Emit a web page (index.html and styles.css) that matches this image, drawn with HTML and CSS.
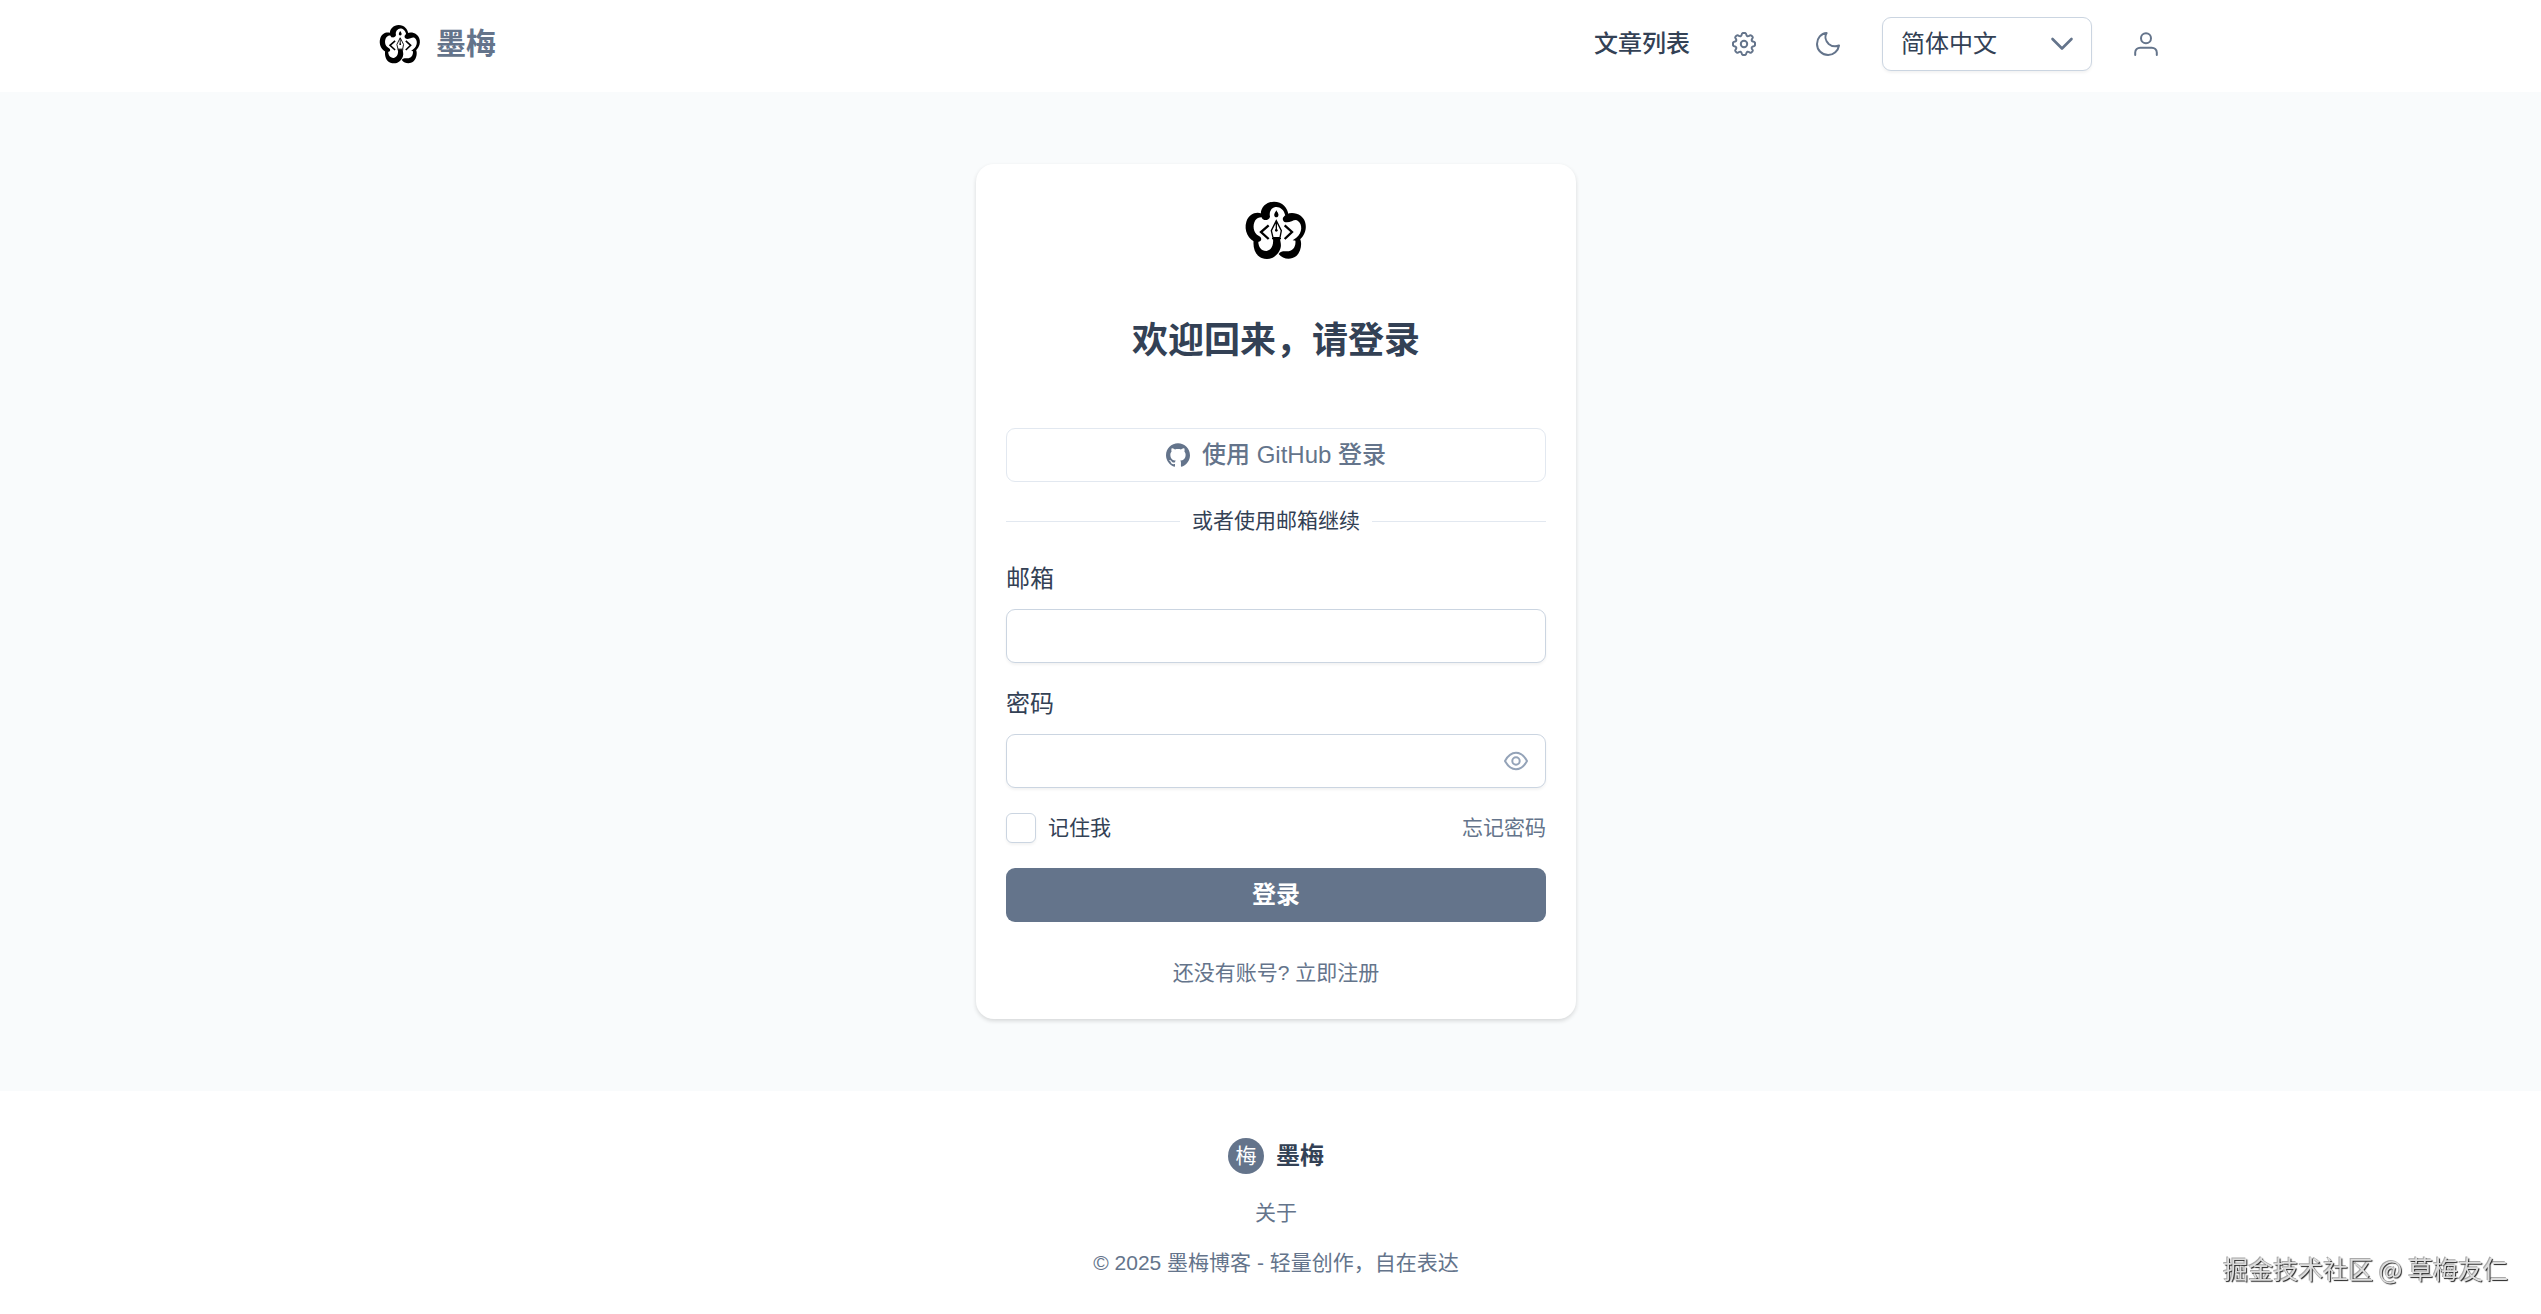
FILE: index.html
```html
<!DOCTYPE html>
<html lang="zh-CN">
<head>
    <meta charset="UTF-8">
    <meta name="viewport" content="width=device-width, initial-scale=1.0">
    <title>登录 - 墨梅</title>
    <link rel="stylesheet" href="styles.css">
</head>
<body>

    <!-- 梅花 Logo，页头和登录卡片共用 -->
    <svg class="sprite" aria-hidden="true">
        <symbol id="plum-logo" viewBox="60 42 216 216">
            <path d="M134 106C118 92 88 96 79 125C71 150 85 182 110 186C127 187 127 172 117 168C99 160 97 135 106 121C112 112 122 110 134 113Z"/>
            <path d="M123 106C119 83 140 65 162 65C187 65 204 84 205 104L196 107C192 87 178 79 166 81C152 84 147 97 150 110C148 121 131 124 126 115Z"/>
            <path d="M189 113C199 95 225 95 242 107C264 124 264 162 234 183L218 181L229 173C248 158 248 132 233 122C225 116 214 127 200 127C190 127 187 119 189 113Z"/>
            <path d="M240 176C247 190 243 216 228 229C212 241 188 238 176 222C183 212 193 214 201 214C217 214 229 202 226 179Z"/>
            <path d="M101 180C98 205 106 226 125 234C150 243 172 230 181 206C185 195 181 185 180 176L159 176C161 194 156 209 140 213C124 214 114 200 115 182Z"/>
            <path d="M169 91C163 101 162 103 163 107C165 113 173 113 175 107C176 103 175 101 169 91Z"/>
            <path d="M169 122L154 152L159 173H180L184 152ZM169 124V150M156 176H183" fill="none" stroke="#000" stroke-width="4"/>
            <circle cx="169" cy="151" r="4"/>
            <path d="M146 136L123 156L146 177M194 136L216 156L194 177" fill="none" stroke="#000" stroke-width="7"/>
        </symbol>
    </svg>

    <header class="header">
        <div class="container header-inner">
            <a class="brand" href="#">
                <svg class="brand-logo" aria-hidden="true"><use href="#plum-logo"/></svg>
                <span>墨梅</span>
            </a>
            <nav class="nav">
                <a class="nav-link" href="#">文章列表</a>
                <button class="icon-btn" type="button" aria-label="设置">
                    <svg class="icon" viewBox="-12 -12 24 24">
                        <path d="M11-1.200V1.200Q10.800 2.200 9 2.400Q7 3.200 8 5Q9.300 6.400 8.600 7.200L7.200 8.600Q6.400 9.300 5 8Q3.200 7 2.400 9Q2.200 10.800 1.200 11H-1.200Q-2.200 10.800-2.400 9Q-3.200 7-5 8Q-6.400 9.300-7.200 8.600L-8.600 7.200Q-9.300 6.400-8 5Q-7 3.200-9 2.400Q-10.800 2.200-11 1.200V-1.200Q-10.800-2.200-9-2.400Q-7-3.200-8-5Q-9.300-6.400-8.600-7.200L-7.200-8.600Q-6.400-9.300-5-8Q-3.200-7-2.400-9Q-2.200-10.800-1.200-11H1.200Q2.200-10.800 2.400-9Q3.200-7 5-8Q6.400-9.300 7.200-8.600L8.600-7.200Q9.300-6.400 8-5Q7-3.200 9-2.400Q10.800-2.200 11-1.200Z"/>
                        <circle r="3.200"/>
                    </svg>
                </button>
                <button class="icon-btn" type="button" aria-label="深色模式">
                    <svg class="icon" viewBox="0 0 24 24">
                        <path d="M10.600 1C5.200 1.400 1 6 1 11.900A11.100 11.100 0 0 0 12.100 23C17.600 23 22.200 18.800 23 13.500C20 14.700 15.600 14.300 12.700 11.900C9.400 9 8.600 4.500 10.600 1Z"/>
                    </svg>
                </button>
                <div class="lang">
                    <select class="lang-select" aria-label="语言">
                        <option>简体中文</option>
                        <option>English</option>
                    </select>
                    <svg class="lang-arrow" viewBox="0 0 24 24"><path d="M2.500 7L12 16.500L21.500 7"/></svg>
                </div>
                <button class="icon-btn" type="button" aria-label="用户">
                    <svg class="icon" viewBox="0 0 24 24">
                        <circle cx="12" cy="6.200" r="5"/>
                        <path d="M1.200 23V20.500A5 5 0 0 1 6.200 15.700H17.800A5 5 0 0 1 22.800 20.500V23"/>
                    </svg>
                </button>
            </nav>
        </div>
    </header>

    <main class="main">
        <form class="card">
            <svg class="card-logo" aria-hidden="true"><use href="#plum-logo"/></svg>
            <h1 class="card-title">欢迎回来，请登录</h1>

            <button class="github-btn" type="button">
                <svg class="github-icon" viewBox="0 0 24 24">
                    <path d="M12 .297c-6.630 0-12 5.373-12 12 0 5.303 3.438 9.800 8.205 11.385.6.113.82-.258.82-.577 0-.285-.01-1.040-.015-2.040-3.338.724-4.042-1.610-4.042-1.610C4.422 18.070 3.633 17.700 3.633 17.700c-1.087-.744.084-.729.084-.729 1.205.084 1.838 1.236 1.838 1.236 1.070 1.835 2.809 1.305 3.495.998.108-.776.417-1.305.76-1.605-2.665-.3-5.466-1.332-5.466-5.930 0-1.310.465-2.380 1.235-3.220-.135-.303-.54-1.523.105-3.176 0 0 1.005-.322 3.300 1.230.96-.267 1.980-.399 3-.405 1.020.006 2.040.138 3 .405 2.280-1.552 3.285-1.230 3.285-1.230.645 1.653.24 2.873.12 3.176.765.84 1.230 1.910 1.230 3.220 0 4.610-2.805 5.625-5.475 5.920.42.36.81 1.096.81 2.220 0 1.606-.015 2.896-.015 3.286 0 .315.21.69.825.57C20.565 22.092 24 17.592 24 12.297c0-6.627-5.373-12-12-12"/>
                </svg>
                <span>使用 GitHub 登录</span>
            </button>

            <div class="divider">或者使用邮箱继续</div>

            <div class="field">
                <label for="email">邮箱</label>
                <input class="text-input" type="email" id="email">
            </div>
            <div class="field">
                <label for="password">密码</label>
                <div class="password-wrap">
                    <input class="text-input" type="password" id="password">
                    <button class="eye-btn" type="button" aria-label="显示密码">
                        <svg class="icon" viewBox="0 0 24 24">
                            <path d="M1 12C4 6.500 7.600 3.800 12 3.800S20 6.500 23 12C20 17.500 16.400 20.200 12 20.200S4 17.500 1 12Z"/>
                            <circle cx="12" cy="12" r="3.700"/>
                        </svg>
                    </button>
                </div>
            </div>

            <div class="options">
                <label class="remember" for="remember">
                    <input type="checkbox" id="remember">
                    记住我
                </label>
                <a href="#">忘记密码</a>
            </div>

            <button class="submit-btn" type="submit">登录</button>

            <p class="register">还没有账号? <a href="#">立即注册</a></p>
        </form>
    </main>

    <footer class="footer">
        <div class="footer-brand">
            <span class="footer-badge">梅</span>
            <span>墨梅</span>
        </div>
        <a class="footer-link" href="#">关于</a>
        <p class="copyright">© 2025 墨梅博客 - 轻量创作，自在表达</p>
    </footer>

    <div class="watermark">掘金技术社区 @ 草梅友仁</div>

</body>
</html>
```
FILE: styles.css
```css
* {
    box-sizing: border-box;
}

body {
    margin: 0;
    min-height: 100vh;
    display: flex;
    flex-direction: column;
    font-family: "Liberation Sans", "Noto Sans CJK SC", sans-serif;
    font-size: 24px;
    line-height: 36px;
    color: #334155;
    background-color: #fff;
}

a {
    color: inherit;
    text-decoration: none;
}

button,
input,
select {
    font: inherit;
    color: inherit;
}

button {
    padding: 0;
    border: none;
    background: none;
    cursor: pointer;
}

.sprite {
    display: none;
}

.icon {
    display: block;
    width: 24px;
    height: 24px;
    fill: none;
    stroke: currentColor;
    stroke-width: 2;
    stroke-linecap: round;
    stroke-linejoin: round;
}

/* 页头 */
.header,
.main,
.footer {
    padding-left: 11px;
}

.header {
    padding-top: 17px;
    padding-bottom: 21px;
}

.container {
    max-width: 1800px;
    margin: 0 auto;
}

.header-inner {
    display: flex;
    align-items: center;
    justify-content: space-between;
}

.brand {
    display: flex;
    align-items: center;
    gap: 12px;
    font-size: 30px;
    font-weight: 700;
    color: #64748b;
}

.brand-logo {
    width: 48px;
    height: 48px;
}

.nav {
    display: flex;
    align-items: center;
    gap: 24px;
}

.nav-link {
    font-weight: 500;
}

.icon-btn {
    width: 60px;
    height: 54px;
    display: flex;
    align-items: center;
    justify-content: center;
    color: #64748b;
}

.lang {
    position: relative;
    width: 210px;
}

.lang-select {
    display: block;
    width: 100%;
    height: 54px;
    padding: 0 18px;
    appearance: none;
    border: 1px solid #cbd5e1;
    border-radius: 9px;
    background-color: #fff;
    box-shadow: 0 2px 3px rgba(18, 18, 23, 0.05);
}

.lang-arrow {
    position: absolute;
    top: 15px;
    right: 18px;
    width: 24px;
    height: 24px;
    fill: none;
    stroke: #64748b;
    stroke-width: 2.6;
    stroke-linecap: round;
    stroke-linejoin: round;
    pointer-events: none;
}

/* 登录卡片 */
.main {
    flex: 1;
    padding-top: 72px;
    padding-bottom: 72px;
    background-color: #f9fbfc;
}

.card {
    display: flex;
    flex-direction: column;
    max-width: 600px;
    margin: 0 auto;
    padding: 30px;
    border-radius: 18px;
    background-color: #fff;
    box-shadow: 0 2px 4px rgba(0, 0, 0, 0.14);
}

.card-logo {
    align-self: center;
    width: 72px;
    height: 72px;
}

.card-title {
    margin: 48px 0 60px;
    font-size: 36px;
    line-height: 54px;
    text-align: center;
}

.github-btn {
    display: flex;
    align-items: center;
    justify-content: center;
    gap: 12px;
    height: 54px;
    border: 1px solid #e2e8f0;
    border-radius: 9px;
    font-weight: 500;
    color: #64748b;
}

.github-icon {
    width: 24px;
    height: 24px;
    fill: currentColor;
}

.divider {
    display: flex;
    align-items: center;
    gap: 12px;
    margin: 24px 0 25px;
    font-size: 21px;
    line-height: 30px;
}

.divider::before,
.divider::after {
    content: "";
    flex: 1;
    border-top: 1px solid #e2e8f0;
}

.field {
    display: flex;
    flex-direction: column;
    gap: 12px;
}

.field + .field {
    margin-top: 23px;
}

.text-input {
    display: block;
    width: 100%;
    height: 54px;
    padding: 0 18px;
    border: 1px solid #cbd5e1;
    border-radius: 9px;
    background-color: #fff;
    box-shadow: 0 2px 3px rgba(18, 18, 23, 0.05);
}

.password-wrap {
    position: relative;
}

.eye-btn {
    position: absolute;
    top: 15px;
    right: 18px;
    color: #94a3b8;
}

.options {
    display: flex;
    align-items: center;
    justify-content: space-between;
    margin: 25px 0;
    font-size: 21px;
    line-height: 30px;
}

.options a {
    color: #64748b;
}

.remember {
    display: flex;
    align-items: center;
    gap: 12px;
}

.remember input {
    width: 30px;
    height: 30px;
    margin: 0;
    appearance: none;
    border: 1px solid #cbd5e1;
    border-radius: 6px;
    background-color: #fff;
    box-shadow: 0 2px 3px rgba(18, 18, 23, 0.05);
}

.remember input:checked {
    background-color: #64748b;
}

.submit-btn {
    height: 54px;
    border-radius: 9px;
    font-weight: 700;
    color: #fff;
    background-color: #64748b;
}

.submit-btn:hover {
    background-color: #475569;
}

.register {
    margin: 35px 0 0;
    font-size: 21px;
    line-height: 32px;
    text-align: center;
    color: #64748b;
}

/* 页脚 */
.footer {
    display: flex;
    flex-direction: column;
    align-items: center;
    padding-top: 47px;
    padding-bottom: 36px;
    font-size: 21px;
    line-height: 30px;
    color: #64748b;
}

.footer-brand {
    display: flex;
    align-items: center;
    gap: 12px;
    font-size: 24px;
    font-weight: 700;
    color: #334155;
}

.footer-badge {
    width: 36px;
    height: 36px;
    border-radius: 50%;
    font-size: 21px;
    font-weight: 400;
    line-height: 36px;
    text-align: center;
    color: #fff;
    background-color: #64748b;
}

.footer-link {
    margin-top: 24px;
}

.copyright {
    margin: 20px 0 0;
}

.watermark {
    position: fixed;
    right: 33px;
    bottom: 28px;
    font-family: "Noto Sans CJK SC", sans-serif;
    font-size: 25px;
    color: #ddd;
    text-shadow: 1px 1px 1px #222, -1px -1px 0 #aaa;
}
```
